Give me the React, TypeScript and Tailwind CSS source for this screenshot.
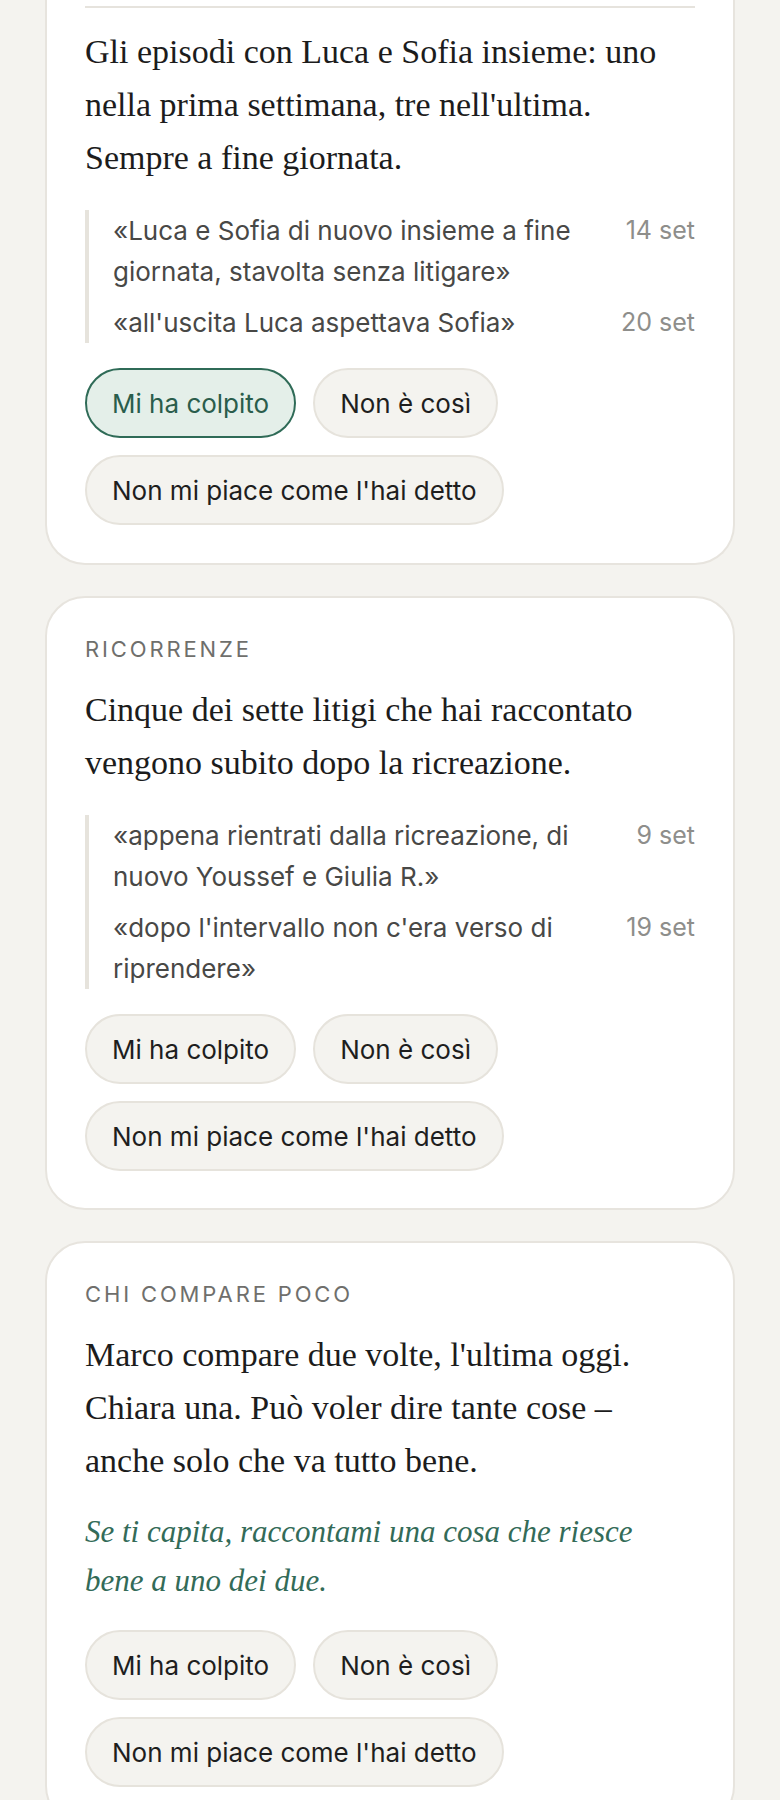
import React from 'react';

type Quote = { text: string; date: string };

type Insight = {
  label?: string;
  body: string;
  quotes?: Quote[];
  prompt?: string;
  picked?: string;
  continued?: boolean;
};

const REACTIONS = ['Mi ha colpito', 'Non è così', "Non mi piace come l'hai detto"];

const INSIGHTS: Insight[] = [
  {
    continued: true,
    body: "Gli episodi con Luca e Sofia insieme: uno nella prima settimana, tre nell'ultima. Sempre a fine giornata.",
    quotes: [
      { text: '«Luca e Sofia di nuovo insieme a fine giornata, stavolta senza litigare»', date: '14 set' },
      { text: "«all'uscita Luca aspettava Sofia»", date: '20 set' },
    ],
    picked: 'Mi ha colpito',
  },
  {
    label: 'Ricorrenze',
    body: 'Cinque dei sette litigi che hai raccontato vengono subito dopo la ricreazione.',
    quotes: [
      { text: '«appena rientrati dalla ricreazione, di nuovo Youssef e Giulia R.»', date: '9 set' },
      { text: "«dopo l'intervallo non c'era verso di riprendere»", date: '19 set' },
    ],
  },
  {
    label: 'Chi compare poco',
    body: "Marco compare due volte, l'ultima oggi. Chiara una. Può voler dire tante cose – anche solo che va tutto bene.",
    prompt: 'Se ti capita, raccontami una cosa che riesce bene a uno dei due.',
  },
];

function Reactions({ picked }: { picked?: string }) {
  return (
    <div className="mt-[25px] flex flex-wrap gap-[17px]">
      {REACTIONS.map((r) => {
        const on = r === picked;
        return (
          <button
            key={r}
            className={
              on
                ? "h-[70px] rounded-full border-2 border-[#2f6b57] bg-[#e4efe9] px-[25px] font-['Inter',sans-serif] text-[26px] text-[#2a5d4c]"
                : "h-[70px] rounded-full border-2 border-[#e6e3dc] bg-[#f4f3ef] px-[25px] font-['Inter',sans-serif] text-[26px] text-[#1e1e1e]"
            }
          >
            {r}
          </button>
        );
      })}
    </div>
  );
}

function InsightCard({ item }: { item: Insight }) {
  return (
    <div
      className={
        item.continued
          ? 'rounded-b-[40px] border-2 border-t-0 border-[#e7e4de] bg-white px-[38px] pb-[38px] pt-[6px]'
          : 'rounded-[40px] border-2 border-[#e7e4de] bg-white px-[38px] py-[37px]'
      }
    >
      {item.continued && <div className="mb-[17px] h-[2px] bg-[#e6e3dd]" />}

      {item.label && (
        <div className="mb-[20px] font-['Inter',sans-serif] text-[22px] uppercase leading-[28px] tracking-[0.13em] text-[#6f6f6c]">
          {item.label}
        </div>
      )}

      <p className="font-['Liberation_Serif',serif] text-[34px] leading-[53px] text-[#1c1c1c]">{item.body}</p>

      {item.prompt && (
        <p className="mt-[20px] max-w-[570px] font-['Liberation_Serif',serif] text-[31px] italic leading-[49px] text-[#336b58]">
          {item.prompt}
        </p>
      )}

      {item.quotes && (
        <div className="mt-[26px] flex flex-col gap-[10px] border-l-4 border-[#e6e3dc] pl-[24px]">
          {item.quotes.map((q) => (
            <div key={q.date} className="flex items-start gap-6 font-['Inter',sans-serif] leading-[41px]">
              <span className="flex-1 text-[26px] text-[#484846]">{q.text}</span>
              <span className="shrink-0 whitespace-nowrap text-[25px] text-[#8e8e8b]">{q.date}</span>
            </div>
          ))}
        </div>
      )}

      <Reactions picked={item.picked} />
    </div>
  );
}

export default function App() {
  return (
    <div className="h-[1800px] overflow-hidden bg-[#f4f3ef] px-[45px]">
      <div className="flex flex-col gap-[31px]">
        {INSIGHTS.map((item, i) => (
          <InsightCard key={i} item={item} />
        ))}
      </div>
    </div>
  );
}
